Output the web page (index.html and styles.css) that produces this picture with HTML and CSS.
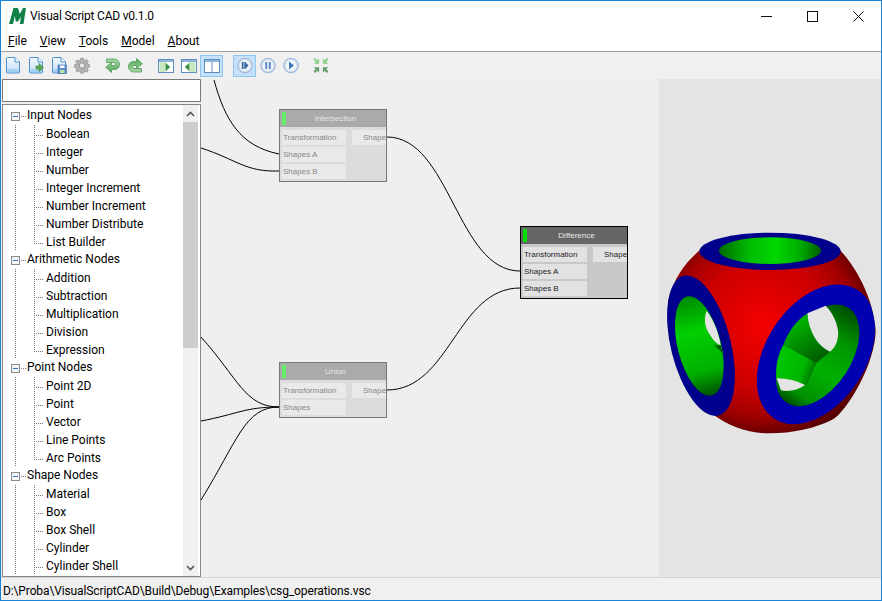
FILE: index.html
```html
<!DOCTYPE html>
<html lang="en">
  <head>
    <meta charset="UTF-8" />
    <title>Visual Script CAD v0.1.0</title>
    <link rel="stylesheet" href="styles.css">
  </head>
  <body>
    <!-- shared toolbar icons -->
    <svg class="defs" width="0" height="0">
      <defs>
        <linearGradient id="docFill" x1="0" y1="0" x2="0" y2="1">
          <stop offset="0" stop-color="#f2f8fe" />
          <stop offset="1" stop-color="#c4dff7" />
        </linearGradient>
        <linearGradient id="greenFill" x1="0" y1="0" x2="0" y2="1">
          <stop offset="0" stop-color="#a6d8a6" />
          <stop offset="1" stop-color="#4fa655" />
        </linearGradient>
        <radialGradient id="roundFill">
          <stop offset="0" stop-color="#ffffff" />
          <stop offset="0.65" stop-color="#eef3fa" />
          <stop offset="1" stop-color="#b7c9e4" />
        </radialGradient>
        <symbol id="doc" viewBox="0 0 16 17">
          <path d="M1.5 1.5a1 1 0 0 1 1-1H10L14.500 5v10a1 1 0 0 1-1 1h-11a1 1 0 0 1-1-1z" fill="url(#docFill)" stroke="#4d8fd0" />
          <path d="M10 .5V5h4.500" fill="#fff" stroke="#4d8fd0" />
          <rect x="2.500" y="12" width="11" height="3" fill="#a3cff3" />
        </symbol>
        <symbol id="gear" viewBox="0 0 16 16">
          <path d="M6.500 0h3l.4 2.300 1.500.6L13.300 1.600l2 2-1.300 1.900.6 1.500 2.400.5v2.800l-2.400.5-.6 1.500 1.300 1.900-2 2-1.900-1.300-1.500.6-.4 2.400h-3l-.4-2.400-1.500-.6-1.900 1.300-2-2L2 12.600l-.6-1.500L-1 10.600V7.800l2.400-.5.6-1.500-1.300-1.900 2-2 1.900 1.300 1.500-.6z" transform="translate(1.100 .6) scale(.87)" fill="#b3b3b3" stroke="#8a8a8a" stroke-width=".8" />
          <circle cx="8" cy="8" r="2.800" fill="#e8e8e8" stroke="#8a8a8a" />
        </symbol>
        <symbol id="undo" viewBox="0 0 15 15">
          <path d="M1.500 1H9C13 1 14.500 4 14.500 6.500C14.500 10 12 11.500 9 11.500H6.500V14.500L.6 9.300L6.500 4.500V7.500H9C11 7.500 11 4.500 9 4.500H1.500Z" fill="url(#greenFill)" stroke="#4f9a55" stroke-width=".8" />
        </symbol>
        <symbol id="panel" viewBox="0 0 16 14">
          <rect x=".5" y=".5" width="15" height="13" fill="#fff" stroke="#5f8fc0" />
          <rect x="1" y="1" width="14" height="2" fill="#8fb5dc" />
          <rect x="1.500" y="3" width="6.500" height="10" fill="#c9e7c0" />
          <path d="M8 5.500v2H7v-4l4 3.500-4 3.500V8z" transform="translate(1 1)" fill="#3f9a45" stroke="#2e7f38" stroke-width=".5" />
        </symbol>
        <symbol id="round" viewBox="0 0 16 16">
          <circle cx="8" cy="8" r="7.300" fill="url(#roundFill)" stroke="#9db6d8" />
        </symbol>
        <symbol id="inarrow" viewBox="0 0 8 8">
          <path d="M7.500 7.500H1L3.300 5.200 .6 2.500 2.500 .6 5.200 3.300 7.500 1z" />
        </symbol>
      </defs>
    </svg>

    <div class="window">
      <header class="titlebar">
        <svg class="logo" viewBox="0 0 17 16" aria-hidden="true">
          <path d="M4.500 0H9L10.800 6L14 0H17L14.500 16H10.800L12 8.500L9 13.500H6.800L5.800 8L4 16H0z" fill="#0e8048" />
        </svg>
        <span class="apptitle">Visual Script CAD v0.1.0</span>
        <div class="winbtns">
          <span class="winbtn"><svg viewBox="0 0 11 11" width="11" height="11"><path d="M0 5.500h11" stroke="#111" /></svg></span>
          <span class="winbtn"><svg viewBox="0 0 11 11" width="11" height="11"><rect x=".5" y=".5" width="10" height="10" fill="none" stroke="#111" /></svg></span>
          <span class="winbtn"><svg viewBox="0 0 11 11" width="11" height="11"><path d="M.5 .5l10 10M10.500 .5l-10 10" stroke="#111" /></svg></span>
        </div>
      </header>

      <nav class="menubar">
        <a href="#"><u>F</u>ile</a>
        <a href="#"><u>V</u>iew</a>
        <a href="#"><u>T</u>ools</a>
        <a href="#"><u>M</u>odel</a>
        <a href="#"><u>A</u>bout</a>
      </nav>

      <div class="toolbar">
        <div class="toolgroup">
          <span class="tool"><svg class="ico16" viewBox="0 0 16 17"><use href="#doc" /></svg></span>
          <span class="tool">
            <svg class="ico16" viewBox="0 0 16 17"><use href="#doc" /><path d="M8 9h3V6.500l4.500 4-4.500 4V12H8z" fill="#5aa84f" stroke="#3f7f3a" stroke-width=".6" /></svg>
          </span>
          <span class="tool">
            <svg class="ico16" viewBox="0 0 16 17"><use href="#doc" /><rect x="7" y="8" width="8.500" height="8.500" fill="#5a8ccf" stroke="#3a69a8" stroke-width=".6" /><rect x="9" y="8.500" width="4.500" height="2.500" fill="#fff" /><rect x="9" y="13" width="4.500" height="3" fill="#bfe59a" /></svg>
          </span>
          <span class="tool"><svg class="ico16" viewBox="0 0 16 16"><use href="#gear" /></svg></span>
        </div>
        <div class="toolgroup gap8">
          <span class="tool"><svg class="ico15" viewBox="0 0 15 15"><use href="#undo" /></svg></span>
          <span class="tool"><svg class="ico15 turn" viewBox="0 0 15 15"><use href="#undo" /></svg></span>
        </div>
        <div class="toolgroup gap7">
          <span class="tool"><svg class="ico16w" viewBox="0 0 16 14"><use href="#panel" /></svg></span>
          <span class="tool"><svg class="ico16w flip" viewBox="0 0 16 14"><use href="#panel" /></svg></span>
          <span class="tool on">
            <svg class="ico16w" viewBox="0 0 16 14"><rect x=".5" y=".5" width="15" height="13" fill="#fff" stroke="#5f8fc0" /><rect x="1" y="1" width="14" height="2" fill="#8fb5dc" /><path d="M8 3v10" stroke="#5f8fc0" /></svg>
          </span>
        </div>
        <div class="toolgroup gap10">
          <span class="tool on">
            <svg class="ico16" viewBox="0 0 16 16"><use href="#round" /><path d="M4.800 4.500h1.800v7H4.800zM7.300 4.500h1l3.200 3.500-3.200 3.500h-1z" fill="#35699f" /></svg>
          </span>
          <span class="tool">
            <svg class="ico16" viewBox="0 0 16 16"><use href="#round" /><path d="M5.300 4.500h2v7h-2zM8.800 4.500h2v7h-2z" fill="#5b8cc8" /></svg>
          </span>
          <span class="tool">
            <svg class="ico16" viewBox="0 0 16 16"><use href="#round" /><path d="M6 4l5 4-5 4z" fill="#3f77b8" /></svg>
          </span>
        </div>
        <div class="toolgroup gap7">
          <span class="tool">
            <svg class="ico16" viewBox="0 0 17 17">
              <use href="#inarrow" width="7" height="7" fill="#8ccf8c" />
              <use href="#inarrow" width="7" height="7" fill="#8ccf8c" transform="translate(17 0) scale(-1 1)" />
              <use href="#inarrow" width="7" height="7" fill="#639f6b" transform="translate(0 17) scale(1 -1)" />
              <use href="#inarrow" width="7" height="7" fill="#639f6b" transform="translate(17 17) scale(-1 -1)" />
            </svg>
          </span>
        </div>
      </div>

      <main class="main">
        <aside class="side">
          <input class="search" type="text" />
          <div class="treebox">
            <ul class="tree">
              <li class="group">
                <div class="grouphead"><span class="toggle"></span><span class="stub"></span>Input Nodes</div>
                <ul class="kids">
                  <li><span class="tick"></span>Boolean</li>
                  <li><span class="tick"></span>Integer</li>
                  <li><span class="tick"></span>Number</li>
                  <li><span class="tick"></span>Integer Increment</li>
                  <li><span class="tick"></span>Number Increment</li>
                  <li><span class="tick"></span>Number Distribute</li>
                  <li><span class="tick"></span>List Builder</li>
                </ul>
              </li>
              <li class="group">
                <div class="grouphead"><span class="toggle"></span><span class="stub"></span>Arithmetic Nodes</div>
                <ul class="kids">
                  <li><span class="tick"></span>Addition</li>
                  <li><span class="tick"></span>Subtraction</li>
                  <li><span class="tick"></span>Multiplication</li>
                  <li><span class="tick"></span>Division</li>
                  <li><span class="tick"></span>Expression</li>
                </ul>
              </li>
              <li class="group">
                <div class="grouphead"><span class="toggle"></span><span class="stub"></span>Point Nodes</div>
                <ul class="kids">
                  <li><span class="tick"></span>Point 2D</li>
                  <li><span class="tick"></span>Point</li>
                  <li><span class="tick"></span>Vector</li>
                  <li><span class="tick"></span>Line Points</li>
                  <li><span class="tick"></span>Arc Points</li>
                </ul>
              </li>
              <li class="group">
                <div class="grouphead"><span class="toggle"></span><span class="stub"></span>Shape Nodes</div>
                <ul class="kids">
                  <li><span class="tick"></span>Material</li>
                  <li><span class="tick"></span>Box</li>
                  <li><span class="tick"></span>Box Shell</li>
                  <li><span class="tick"></span>Cylinder</li>
                  <li><span class="tick"></span>Cylinder Shell</li>
                </ul>
              </li>
            </ul>
            <div class="scrollbar">
              <span class="arrow"><svg viewBox="0 0 9 6" width="9" height="6"><path d="M1 5l3.500-3.500L8 5" fill="none" stroke="#555" stroke-width="1.600" /></svg></span>
              <span class="thumb"></span>
              <span class="arrow"><svg viewBox="0 0 9 6" width="9" height="6"><path d="M1 1l3.500 3.500L8 1" fill="none" stroke="#555" stroke-width="1.600" /></svg></span>
            </div>
          </div>
        </aside>

        <!-- node editor: nodes sit on a free canvas -->
        <section class="canvas">
          <svg class="wires" width="458" height="498" viewBox="201 79 458 498">
            <g fill="none" stroke="#000" stroke-width="1">
              <path d="M214 80C225 120 240 146 279 154" />
              <path d="M201 148C238 160 245 172 279 171" />
              <path d="M387 137C450 137 457 271 520 271" />
              <path d="M387 390C450 390 457 288 520 288" />
              <path d="M201 337C238 378 245 407 279 407" />
              <path d="M201 421C238 414 245 407 279 407" />
              <path d="M201 500C238 440 245 407 279 407" />
            </g>
          </svg>

          <div class="node faded n-inter">
            <div class="nodehead"><span class="flag"></span>Intersection</div>
            <div class="nodebody">
              <div class="slots">
                <span class="slot">Transformation</span>
                <span class="slot">Shapes A</span>
                <span class="slot">Shapes B</span>
              </div>
              <span class="slot out">Shape</span>
            </div>
          </div>

          <div class="node n-diff">
            <div class="nodehead"><span class="flag"></span>Difference</div>
            <div class="nodebody">
              <div class="slots">
                <span class="slot">Transformation</span>
                <span class="slot">Shapes A</span>
                <span class="slot">Shapes B</span>
              </div>
              <span class="slot out">Shape</span>
            </div>
          </div>

          <div class="node faded n-union">
            <div class="nodehead"><span class="flag"></span>Union</div>
            <div class="nodebody">
              <div class="slots">
                <span class="slot">Transformation</span>
                <span class="slot">Shapes</span>
              </div>
              <span class="slot out">Shape</span>
            </div>
          </div>
        </section>

        <!-- 3D view -->
        <section class="viewer">
          <svg class="model" viewBox="0 0 681 675" width="227" height="225">
            <defs>
              <clipPath id="body">
                <path d="M135 90C95 125 60 165 40 240C40 340 70 480 170 580C220 620 280 640 345 640C410 640 480 625 530 600C575 578 662 430 662 330C655 240 610 150 555 90Z" />
              </clipPath>
              <radialGradient id="red" gradientUnits="userSpaceOnUse" cx="325" cy="315" r="345">
                <stop offset="0" stop-color="#f40000" />
                <stop offset="0.55" stop-color="#cc0000" />
                <stop offset="0.8" stop-color="#a00000" />
                <stop offset="1" stop-color="#540000" />
              </radialGradient>
              <linearGradient id="topGreen" x1="0" y1="0" x2="1" y2="0">
                <stop offset="0" stop-color="#006a00" />
                <stop offset="0.3" stop-color="#00bb00" />
                <stop offset="0.55" stop-color="#00d800" />
                <stop offset="0.8" stop-color="#00aa00" />
                <stop offset="1" stop-color="#005c00" />
              </linearGradient>
              <linearGradient id="leftGreen" x1="0" y1="0" x2="0" y2="1">
                <stop offset="0" stop-color="#008a00" />
                <stop offset="0.35" stop-color="#00d000" />
                <stop offset="0.75" stop-color="#00b000" />
                <stop offset="1" stop-color="#005000" />
              </linearGradient>
              <linearGradient id="rightGreen" x1="0" y1="0" x2="0" y2="1">
                <stop offset="0" stop-color="#004c00" />
                <stop offset="0.28" stop-color="#009400" />
                <stop offset="0.6" stop-color="#00b000" />
                <stop offset="0.88" stop-color="#009000" />
                <stop offset="1" stop-color="#004c00" />
              </linearGradient>
              <linearGradient id="facetA" gradientUnits="userSpaceOnUse" x1="415" y1="320" x2="480" y2="420">
                <stop offset="0" stop-color="#00b000" />
                <stop offset="1" stop-color="#006000" />
              </linearGradient>
              <linearGradient id="facetB" gradientUnits="userSpaceOnUse" x1="385" y1="420" x2="480" y2="455">
                <stop offset="0" stop-color="#00c400" />
                <stop offset="0.65" stop-color="#00b400" />
                <stop offset="1" stop-color="#007000" />
              </linearGradient>
            </defs>
            <path d="M135 90C95 125 60 165 40 240C40 340 70 480 170 580C220 620 280 640 345 640C410 640 480 625 530 600C575 578 662 430 662 330C655 240 610 150 555 90Z" fill="url(#red)" />
            <ellipse cx="345" cy="94" rx="212" ry="56" fill="#00008c" />
            <ellipse cx="345" cy="92" rx="153" ry="40" fill="url(#topGreen)" />
            <ellipse cx="138" cy="377" rx="90" ry="216" transform="rotate(-14 138 377)" fill="#00008c" />
            <ellipse cx="133" cy="378" rx="65" ry="153" transform="rotate(-14 133 378)" fill="url(#leftGreen)" />
            <path d="M155 272C146 292 148 322 165 345C175 362 186 372 197 376C192 340 176 300 155 272Z" fill="#e4e4e4" />
            <path d="M176 376L197 376L205 402C195 392 185 382 176 376Z" fill="#006000" />
            <g clip-path="url(#body)">
              <ellipse cx="483" cy="403" rx="150" ry="230" transform="rotate(33 483 403)" fill="#0000b0" />
            </g>
            <ellipse cx="488" cy="406" rx="100" ry="170" transform="rotate(33 488 406)" fill="url(#rightGreen)" />
            <path d="M385 375L484 430L525 395C490 380 462 340 457 280C425 300 400 335 385 375Z" fill="url(#facetA)" />
            <path d="M385 375L484 430L455 495C430 485 400 475 365 475C360 440 370 400 385 375Z" fill="url(#facetB)" />
            <path d="M457 280L512 257C540 285 555 330 548 355C545 375 535 387 525 395C490 380 462 340 457 280Z" fill="#e4e4e4" />
            <path d="M365 475C400 475 430 485 450 495C430 510 400 516 378 511Z" fill="#e4e4e4" />
          </svg>
        </section>
      </main>

      <footer class="statusbar">D:\Proba\VisualScriptCAD\Build\Debug\Examples\csg_operations.vsc</footer>
    </div>
  </body>
</html>
```

FILE: styles.css
```css
/* reset */
html,
body,
ul {
  margin: 0;
  padding: 0;
}
ul {
  list-style: none;
}
body {
  font-family: Roboto, "Liberation Sans", sans-serif;
  font-size: 12px;
  color: #000;
  overflow: hidden;
}
.defs {
  position: absolute;
}

/* window frame */
.window {
  display: flex;
  flex-direction: column;
  box-sizing: border-box;
  width: 882px;
  height: 601px;
  border: 1px solid #1883d7;
  background-color: #fff;
}

/* title bar */
.titlebar {
  display: flex;
  align-items: center;
  height: 30px;
  flex: none;
}
.logo {
  width: 17px;
  height: 16px;
  margin-left: 8px;
  margin-right: 4px;
}
.apptitle {
  font-size: 12px;
  letter-spacing: -0.2px;
}
.winbtns {
  display: flex;
  margin-left: auto;
}
.winbtn {
  display: flex;
  align-items: center;
  justify-content: center;
  width: 46px;
  height: 30px;
}

/* menu */
.menubar {
  display: flex;
  align-items: center;
  height: 20px;
  flex: none;
  padding-left: 7px;
  border-bottom: 1px solid #a0a0a0;
}
.menubar a {
  color: #000;
  text-decoration: none;
  margin-right: 13px;
}

/* toolbar */
.toolbar {
  display: flex;
  align-items: center;
  height: 27px;
  flex: none;
  background-color: #f0f0f0;
}
.toolgroup {
  display: flex;
}
.gap7 {
  margin-left: 7px;
}
.gap8 {
  margin-left: 8px;
}
.gap10 {
  margin-left: 10px;
}
.tool {
  display: flex;
  align-items: center;
  justify-content: center;
  box-sizing: border-box;
  width: 23px;
  height: 22px;
}
.tool.on {
  background-color: #c5e0f8;
  border: 1px solid #8ec6f2;
}
.ico16 {
  width: 16px;
  height: 17px;
}
.ico15 {
  width: 15px;
  height: 15px;
}
.ico16w {
  width: 16px;
  height: 14px;
}
.flip {
  transform: scaleX(-1);
}
.turn {
  transform: rotate(180deg);
}

/* main area */
.main {
  display: flex;
  flex: 1;
  min-height: 0;
}
.side {
  display: flex;
  flex-direction: column;
  box-sizing: border-box;
  width: 200px;
  padding-left: 1px;
  gap: 2px;
  background-color: #f0f0f0;
}
.search {
  box-sizing: border-box;
  width: 199px;
  height: 23px;
  margin: 0;
  padding: 0;
  border: 1px solid #7a7a7a;
  background-color: #fff;
  outline: none;
}
.treebox {
  display: flex;
  flex: 1;
  min-height: 0;
  box-sizing: border-box;
  width: 199px;
  border: 1px solid #828790;
  background-color: #fff;
  overflow: hidden;
}

/* tree */
.tree {
  flex: 1;
  padding-top: 2px;
  overflow: hidden;
}
.grouphead {
  display: flex;
  align-items: center;
  box-sizing: border-box;
  height: 18px;
  padding-left: 8px;
  padding-bottom: 2px;
}
.toggle {
  display: flex;
  align-items: center;
  justify-content: center;
  flex: none;
  box-sizing: border-box;
  width: 9px;
  height: 9px;
  margin-top: 2px;
  border: 1px solid #8a8a8a;
  background-color: #f4f4f4;
}
.toggle::before {
  content: '';
  display: block;
  width: 5px;
  height: 1px;
  background-color: #3c6fc4;
}
.stub {
  flex: none;
  width: 5px;
  height: 1px;
  margin: 2px 1px 0 1px;
  background: repeating-linear-gradient(to right, #777 0 1px, transparent 1px 2px);
}
/* dotted line of the top level runs down behind the children */
.kids {
  margin-left: 12px;
  padding-left: 19px;
  background: repeating-linear-gradient(to bottom, #777 0 1px, transparent 1px 2px) 0 0 / 1px 100% no-repeat;
}
.kids li {
  display: flex;
  align-items: center;
  height: 18px;
}
.tick {
  flex: none;
  align-self: stretch;
  width: 12px;
  background:
    repeating-linear-gradient(to right, #777 0 1px, transparent 1px 2px) 0 10px / 9px 1px no-repeat,
    repeating-linear-gradient(to bottom, #777 0 1px, transparent 1px 2px) 0 0 / 1px 100% no-repeat;
}
.kids li:last-child .tick {
  background-size: 9px 1px, 1px 11px;
}
.group:last-child .kids li:last-child .tick {
  background-size: 9px 1px, 1px 100%;
}

/* scrollbar */
.scrollbar {
  display: flex;
  flex-direction: column;
  flex: none;
  width: 15px;
  margin-right: 2px;
  background-color: #f0f0f0;
}
.arrow {
  display: flex;
  align-items: center;
  justify-content: center;
  flex: none;
  height: 17px;
}
.thumb {
  flex: none;
  height: 226px;
  margin-bottom: auto;
  background-color: #cdcdcd;
}

/* node canvas */
.canvas {
  position: relative;
  flex: none;
  width: 458px;
  background-color: #efefef;
  overflow: hidden;
}
.wires {
  position: absolute;
  top: 0;
  left: 0;
}
.node {
  position: absolute;
  box-sizing: border-box;
  width: 108px;
  border: 1px solid #000;
  background-color: #c8c8c8;
  font-family: "Liberation Sans", Arial, sans-serif;
  font-size: 8px;
  color: #222;
}
.nodehead {
  display: flex;
  align-items: center;
  justify-content: center;
  position: relative;
  height: 17px;
  padding-left: 5px;
  background-color: #666;
  color: #e8e8e8;
}
.flag {
  position: absolute;
  top: 2px;
  left: 2px;
  width: 4px;
  height: 13px;
  background-color: #00e000;
}
.nodebody {
  display: flex;
  justify-content: space-between;
  padding: 3px 0 2px 2px;
}
.slots {
  display: flex;
  flex-direction: column;
  gap: 2px;
}
.slot {
  display: block;
  box-sizing: border-box;
  width: 64px;
  height: 15px;
  padding-left: 1px;
  line-height: 15px;
  background-color: #e2e2e2;
  white-space: nowrap;
}
.slot.out {
  width: 34px;
  padding-left: 11px;
}

/* not selected nodes are washed out */
.faded {
  border-color: #777;
  background-color: #dcdcdc;
  color: #888;
}
.faded .nodehead {
  background-color: #aaa;
  color: #e6e6e6;
}
.faded .flag {
  background-color: #66ee66;
}
.faded .slot {
  background-color: #e9e9e9;
}
.n-inter {
  left: 78px;
  top: 30px;
  height: 73px;
}
.n-diff {
  left: 319px;
  top: 147px;
  height: 73px;
}
.n-union {
  left: 78px;
  top: 283px;
  height: 56px;
}

/* 3D view */
.viewer {
  position: relative;
  flex: 1;
  background-color: #e4e4e4;
}
.model {
  position: absolute;
  left: -4px;
  top: 141px;
}

/* status bar */
.statusbar {
  flex: none;
  box-sizing: border-box;
  height: 23px;
  padding: 3px 0 0 2px;
  border-top: 1px solid #d4d4d4;
  background-color: #f0f0f0;
  line-height: 20px;
  letter-spacing: -0.12px;
  white-space: nowrap;
}
```
